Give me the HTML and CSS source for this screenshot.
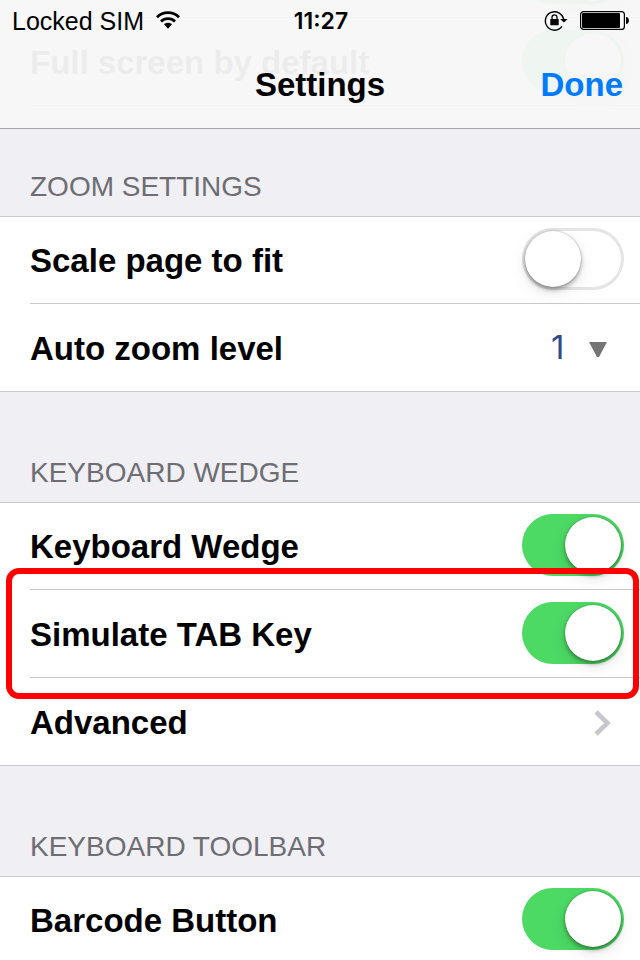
FILE: index.html
```html
<!DOCTYPE html>
<html lang="en">
<head>
    <meta charset="UTF-8">
    <meta name="viewport" content="width=device-width, initial-scale=1.0">
    <title>Settings</title>
    <link rel="stylesheet" href="styles.css">
</head>
<body>

<header class="top-bar">
    <!-- rows scrolled under the translucent bar -->
    <div class="under-bar" aria-hidden="true">
        <div class="row">
            <span class="label"></span>
            <span class="switch on"></span>
        </div>
        <div class="row">
            <span class="label">Full screen by default</span>
            <span class="switch on"></span>
        </div>
    </div>

    <div class="status-bar">
        <div class="carrier">
            <span>Locked SIM</span>
            <svg width="24" height="20" viewBox="0 0 24 20">
                <g fill="none" stroke="#000" stroke-width="2.8">
                    <path d="M1 6.2 C7 0.2 17 0.2 23 6.2"/>
                    <path d="M5 10.4 C9 6.6 15 6.6 19 10.4"/>
                </g>
                <path d="M8 13.2 C10.4 11.2 13.6 11.2 16 13.2 L12 17.8 Z"/>
            </svg>
        </div>
        <time class="clock">11:27</time>
        <div class="indicators">
            <svg width="24" height="22" viewBox="0 0 24 22">
                <path d="M18 16.4 A9.2 9.2 0 1 1 19.7 10" fill="none" stroke="#000" stroke-width="1.4"/>
                <path d="M16.2 9 H23.6 L19.9 12.6 Z"/>
                <rect x="6.3" y="9" width="8.4" height="6.2" rx="0.6"/>
                <path d="M8 9.5 V7.3 A2.5 2.5 0 0 1 13 7.3 V9.5" fill="none" stroke="#000" stroke-width="1.3"/>
            </svg>
            <svg width="50" height="20" viewBox="0 0 50 20">
                <rect x="0.6" y="0.6" width="43.8" height="17.8" rx="3" fill="none" stroke="#000" stroke-width="1.2"/>
                <rect x="2" y="2" width="38" height="15" rx="1"/>
                <path d="M46 6 C49.9 6 49.9 13 46 13 Z"/>
            </svg>
        </div>
    </div>

    <div class="nav-bar">
        <h1>Settings</h1>
        <button class="done-btn" type="button">Done</button>
    </div>
</header>

<main>
    <h2 class="first">ZOOM SETTINGS</h2>
    <div class="group">
        <div class="row">
            <label class="label" for="scale-page">Scale page to fit</label>
            <input class="switch" type="checkbox" id="scale-page">
        </div>
        <div class="row">
            <label class="label" for="zoom-level">Auto zoom level</label>
            <div class="zoom-picker">
                <select id="zoom-level">
                    <option selected>1</option>
                    <option>2</option>
                    <option>3</option>
                </select>
                <svg width="20" height="16" viewBox="0 0 20 16">
                    <path d="M1 0 H19 L11 15 H9 Z" fill="#757575"/>
                </svg>
            </div>
        </div>
    </div>

    <h2>KEYBOARD WEDGE</h2>
    <div class="group">
        <div class="row">
            <label class="label" for="keyboard-wedge">Keyboard Wedge</label>
            <input class="switch" type="checkbox" id="keyboard-wedge" checked>
        </div>
        <div class="row highlighted">
            <label class="label" for="simulate-tab">Simulate TAB Key</label>
            <input class="switch" type="checkbox" id="simulate-tab" checked>
        </div>
        <a class="row" href="#advanced">
            <span class="label">Advanced</span>
            <svg class="chevron" width="18" height="26" viewBox="0 0 18 26">
                <path d="M2 2 L13.5 13 L2 24" fill="none" stroke="#c7c7cc" stroke-width="4.6"/>
            </svg>
        </a>
    </div>

    <h2>KEYBOARD TOOLBAR</h2>
    <div class="group">
        <div class="row">
            <label class="label" for="barcode-button">Barcode Button</label>
            <input class="switch" type="checkbox" id="barcode-button" checked>
        </div>
    </div>
</main>

</body>
</html>
```
FILE: styles.css
```css
*,
*::before,
*::after {
    box-sizing: border-box;
}

body {
    margin: 0;
    height: 100vh;
    display: flex;
    flex-direction: column;
    overflow: hidden;
    background: #efeff4;
    color: #000;
    font-family: "Liberation Sans", Arial, sans-serif;
}

svg {
    display: block;
}

/* Top bar */
.top-bar {
    position: relative;
    flex: none;
    background: #f7f7f7;
    border-bottom: 1px solid #a7a7aa;
}

.under-bar {
    position: absolute;
    top: 0;
    left: 0;
    right: 0;
    height: 106px;
    display: flex;
    flex-direction: column;
    justify-content: flex-end;
    overflow: hidden;
    opacity: 0.04;
}

.under-bar .row {
    flex: none;
}

.status-bar {
    position: relative;
    display: grid;
    grid-template-columns: 1fr auto 1fr;
    align-items: center;
    height: 40px;
    padding: 2px 10px 0 12px;
    font-size: 25px;
    line-height: 28px;
}

.carrier,
.indicators {
    display: flex;
    align-items: center;
    gap: 12px;
}

.indicators {
    justify-content: flex-end;
}

.clock {
    font-family: Inter, sans-serif;
    font-size: 23px;
    font-weight: 600;
}

.nav-bar {
    position: relative;
    display: grid;
    grid-template-columns: 1fr auto 1fr;
    height: 88px;
    padding: 25px 17px 23px;
}

h1,
.done-btn {
    margin: 0;
    font-size: 33px;
    font-weight: bold;
    line-height: 40px;
}

h1 {
    grid-column: 2;
}

.done-btn {
    justify-self: end;
    padding: 0;
    border: none;
    background: none;
    color: #007aff;
    font-family: inherit;
    cursor: pointer;
}

/* Settings list */
main {
    flex: 1;
    overflow-y: auto;
    scrollbar-width: none;
}

h2 {
    margin: 0;
    padding: 65px 30px 13px;
    color: #6d6d72;
    font-size: 28px;
    font-weight: normal;
    line-height: 32px;
}

h2.first {
    padding-top: 42px;
}

.group {
    background: #fff;
    border-top: 1px solid #c8c7cc;
    border-bottom: 1px solid #c8c7cc;
}

.row {
    position: relative;
    display: flex;
    align-items: center;
    justify-content: space-between;
    height: 88px;
    margin-left: 30px;
    padding: 2px 16px 0 0;
    border-bottom: 1px solid #c8c7cc;
    color: inherit;
    text-decoration: none;
}

.group .row:first-child,
.group .row:last-child {
    height: 87px;
}

.group .row:last-child {
    border-bottom: none;
}

.group .row:only-child {
    height: 86px;
}

.label {
    font-size: 33px;
    font-weight: bold;
    line-height: 40px;
}

/* Toggle switch */
.switch {
    appearance: none;
    flex: none;
    width: 102px;
    height: 62px;
    margin: 0 0 4px;
    padding: 3px;
    border-radius: 31px;
    background: #fff;
    box-shadow: inset 0 0 0 3px #e5e5e5;
    cursor: pointer;
}

.switch::before {
    content: "";
    display: block;
    width: 56px;
    height: 56px;
    border-radius: 50%;
    background: #fff;
    box-shadow: 0 3px 4px rgba(0, 0, 0, 0.3), 0 0 2px rgba(0, 0, 0, 0.3), 0 6px 16px rgba(0, 0, 0, 0.1);
}

.switch:checked,
.switch.on {
    background: #4cd964;
    box-shadow: none;
}

.switch:checked::before,
.switch.on::before {
    margin-left: 40px;
}

/* Zoom level drop-down */
.zoom-picker {
    display: flex;
    align-items: center;
    gap: 16px;
    margin-bottom: 4px;
    padding-right: 16px;
}

.zoom-picker select {
    appearance: none;
    padding: 0;
    border: none;
    background: none;
    color: #2f4b8c;
    font-family: Inter, sans-serif;
    font-size: 33px;
    line-height: 40px;
    cursor: pointer;
}

.zoom-picker svg {
    margin-top: 6px;
}

.chevron {
    margin-right: 12px;
}

/* Red frame round the highlighted setting */
.highlighted::after {
    content: "";
    position: absolute;
    top: -22px;
    right: 1px;
    left: -24px;
    height: 131px;
    border: 6px solid #f00;
    border-radius: 13px;
    z-index: 1;
    pointer-events: none;
}
```
